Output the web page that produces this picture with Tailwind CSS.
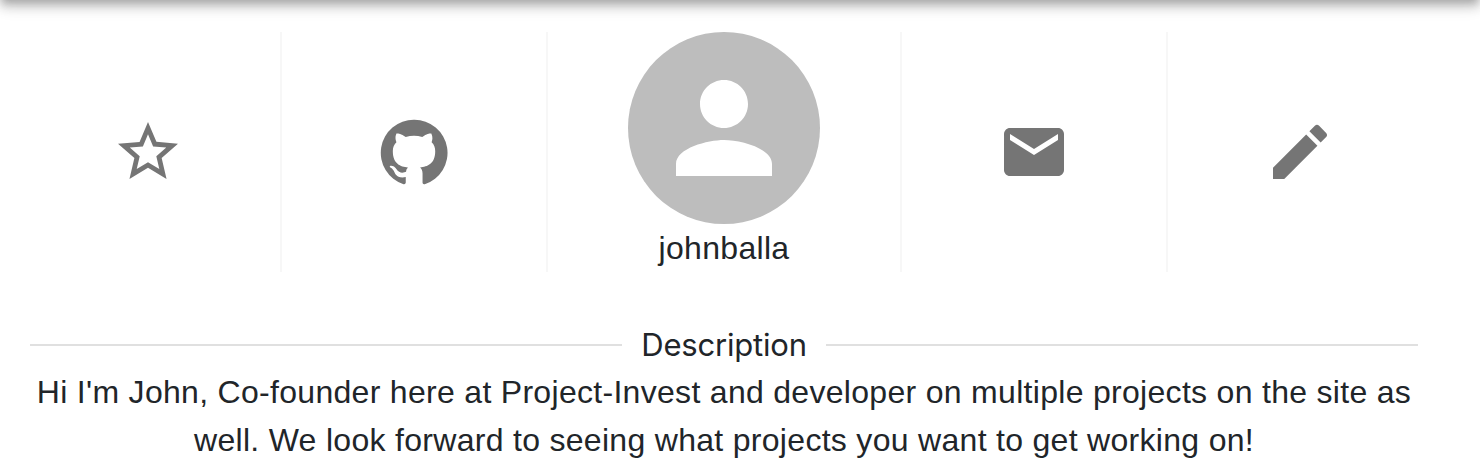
<!DOCTYPE html>
<html lang="en"><head><meta charset="utf-8"><title>Profile</title>
<script src="https://cdn.jsdelivr.net/npm/@tailwindcss/browser@4"></script></head>
<body class="w-[1480px] h-[470px] overflow-hidden bg-white text-[#212529] font-['Liberation_Sans',sans-serif] text-[32px] leading-[48px] tracking-[0.3px]">
<header class="h-16 -mt-16 shadow-[0_4px_8px_-2px_rgba(0,0,0,0.2),0_8px_10px_0_rgba(0,0,0,0.14),0_2px_20px_0_rgba(0,0,0,0.12)]"></header>
<main class="pt-8 pl-[30px] w-[1418px]">
<section class="flex h-60 -ml-[14px] w-[1416px] text-[#757575]">
<div class="w-[266px] border-r-2 border-[#f7f7f7] flex items-center justify-center"><svg class="size-[72px]" viewBox="0 0 24 24" fill="currentColor"><path d="M22 9.24l-7.19-.62L12 2 9.19 8.63 2 9.24l5.46 4.73L5.82 21 12 17.27 18.18 21l-1.63-7.03L22 9.24zM12 15.4l-3.76 2.27 1-4.28-3.32-2.88 4.38-.38L12 6.1l1.71 4.04 4.38.38-3.32 2.88 1 4.28L12 15.4z"/></svg></div>
<div class="w-[266px] border-r-2 border-[#f7f7f7] flex items-center justify-center"><svg class="size-[72px]" viewBox="0 0 24 24" fill="currentColor"><path d="M12 1.27a11 11 0 00-3.48 21.46c.55.09.73-.28.73-.55v-1.84c-3.03.64-3.67-1.46-3.67-1.46-.55-1.29-1.28-1.65-1.28-1.65-.92-.65.1-.65.1-.65 1.1 0 1.73 1.1 1.73 1.1.92 1.65 2.57 1.2 3.21.92a2 2 0 01.64-1.47c-2.47-.27-5.04-1.19-5.04-5.5 0-1.1.46-2.1 1.2-2.84a3.76 3.76 0 010-2.93s.91-.28 3.11 1.1c1.8-.49 3.7-.49 5.5 0 2.1-1.38 3.02-1.1 3.02-1.1a3.76 3.76 0 01.1 2.93c.83.74 1.2 1.74 1.2 2.94 0 4.21-2.57 5.13-5.04 5.4.45.37.82.92.82 2.02v3.03c0 .27.1.64.73.55A11 11 0 0012 1.27"/></svg></div>
<div class="w-[354px] border-r-2 border-[#f7f7f7] flex flex-col items-center text-[#212529]"><div class="size-48 shrink-0 rounded-full bg-[#bdbdbd] text-white flex items-center justify-center"><svg class="size-36" viewBox="0 0 24 24" fill="currentColor"><path d="M12 12c2.21 0 4-1.79 4-4s-1.79-4-4-4-4 1.79-4 4 1.79 4 4 4zm0 2c-2.67 0-8 1.34-8 4v2h16v-2c0-2.66-5.33-4-8-4z"/></svg></div><span>johnballa</span></div>
<div class="w-[266px] border-r-2 border-[#f7f7f7] flex items-center justify-center"><svg class="size-[72px]" viewBox="0 0 24 24" fill="currentColor"><path d="M20 4H4c-1.1 0-1.99.9-1.99 2L2 18c0 1.1.9 2 2 2h16c1.1 0 2-.9 2-2V6c0-1.1-.9-2-2-2zm0 4l-8 5-8-5V6l8 5 8-5v2z"/></svg></div>
<div class="flex-1 flex items-center justify-center"><svg class="size-[72px]" viewBox="0 0 24 24" fill="currentColor"><path d="M3 17.25V21h3.75L17.81 9.94l-3.75-3.75L3 17.25zM20.71 7.04c.39-.39.39-1.02 0-1.41l-2.34-2.34a.9959.9959 0 00-1.41 0l-1.83 1.83 3.75 3.75 1.83-1.83z"/></svg></div>
</section>
<div class="mt-[49px] h-12 flex items-center"><i class="h-0.5 flex-1 bg-[#e0e0e0]"></i><h2 class="w-[204px] text-center font-[Inter,sans-serif] text-[31px] leading-[48px] tracking-[-0.2px]">Description</h2><i class="h-0.5 flex-1 bg-[#e0e0e0]"></i></div>
<p class="-mt-px text-center whitespace-nowrap">Hi I'm John, Co-founder here at Project-Invest and developer on multiple projects on the site as<br>well. We look forward to seeing what projects you want to get working on!</p>
</main></body></html>
